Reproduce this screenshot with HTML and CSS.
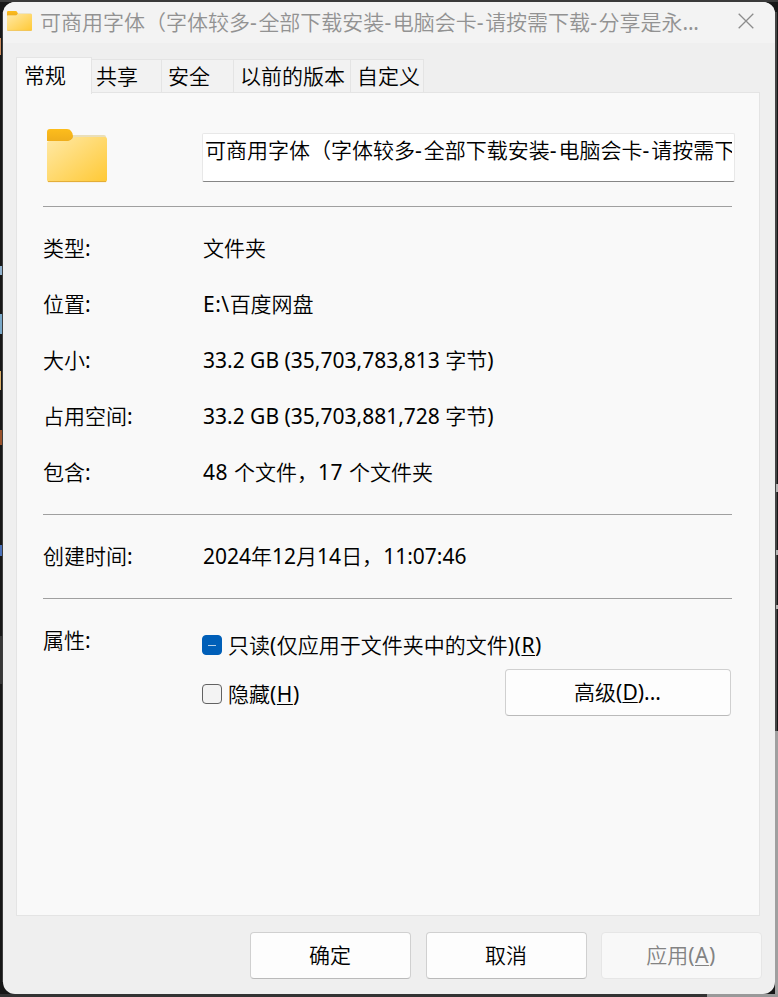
FILE: index.html
```html
<!DOCTYPE html>
<html lang="zh-CN">
<head>
<meta charset="utf-8">
<title>文件夹属性</title>
<link rel="stylesheet" href="styles.css">
</head>
<body>
<div class="desktop">
<main class="window">
  <header class="titlebar">
    <svg class="title-icon" viewBox="0 0 60 54" preserveAspectRatio="none">
      <defs>
        <linearGradient id="folder" x1="0" y1="0" x2="1" y2="1"><stop offset="0" stop-color="#ffe9a6"/><stop offset="1" stop-color="#ffc935"/></linearGradient>
        <linearGradient id="tab" x1="0" y1="0" x2="0" y2="1"><stop offset="0" stop-color="#fdbd1c"/><stop offset="1" stop-color="#efae1c"/></linearGradient>
      </defs>
      <path d="M22 6h35q2 0 2 2v5H22z" fill="#eadfb9"/>
      <path d="M0 3q0-3 3-3h17q2 0 3 1l2 3q2 3 0 6l-1 2-2 1H0z" fill="url(#tab)"/>
      <path d="M0 14q0-2 2-2h19q2 0 3-2 1-2 3-2h31q2 0 2 2v41q0 2-2 2H2q-2 0-2-2z" fill="url(#folder)"/>
      <path d="M1 52.6h58" stroke="#e2ab35"/>
    </svg>
    <h1 class="title">可商用字体（字体较多<span class="dash">-</span>全部下载安装<span class="dash">-</span>电脑会卡<span class="dash">-</span>请按需下载<span class="dash">-</span>分享是永<span class="latin">...</span></h1>
    <svg class="close" viewBox="0 0 16 16"><path d="M.7.7l14.6 14.6M15.3.7L.7 15.3"/></svg>
  </header>
  <nav class="tabs">
    <span class="tab active">常规</span><span class="tab t2">共享</span><span class="tab t3">安全</span><span class="tab t4">以前的版本</span><span class="tab t5">自定义</span>
  </nav>
  <section class="panel">
    <div class="head">
      <svg class="folder" viewBox="0 0 60 54" preserveAspectRatio="none">
        <path d="M22 6h35q2 0 2 2v5H22z" fill="#eadfb9"/>
        <path d="M0 3q0-3 3-3h17q3 0 4 2 2 2 2 5 0 4-4 5H0z" fill="url(#tab)"/>
        <path d="M0 14q0-2 2-2h19q2 0 4-2 2-2 4-2h29q2 0 2 2v41q0 2-2 2H2q-2 0-2-2z" fill="url(#folder)"/>
        <path d="M1 52.6h58" stroke="#e2ab35"/>
      </svg>
      <div class="name"><div class="name-text">可商用字体（字体较多<span class="dash">-</span>全部下载安装<span class="dash">-</span>电脑会卡<span class="dash">-</span>请按需下</div></div>
    </div>
    <div class="group">
      <div class="row"><span>类型<span class="latin">:</span></span><span>文件夹</span></div>
      <div class="row"><span>位置<span class="latin">:</span></span><span><span class="latin wide">E:\</span>百度网盘</span></div>
      <div class="row"><span>大小<span class="latin">:</span></span><span><span class="latin">33.2 GB (35,703,783,813 </span>字节<span class="latin">)</span></span></div>
      <div class="row"><span>占用空间<span class="latin">:</span></span><span><span class="latin">33.2 GB (35,703,881,728 </span>字节<span class="latin">)</span></span></div>
      <div class="row"><span>包含<span class="latin">:</span></span><span><span class="latin wide">48 </span>个文件，<span class="latin wide">17 </span>个文件夹</span></div>
    </div>
    <div class="group">
      <div class="row"><span>创建时间<span class="latin">:</span></span><span><span class="latin">2024</span>年<span class="latin">12</span>月<span class="latin">14</span>日，<span class="latin">11:07:46</span></span></div>
    </div>
    <div class="group attrs">
      <span class="attr-label">属性<span class="latin">:</span></span>
      <div class="attr-body">
        <div class="check"><span class="box mixed"></span><span class="caption">只读<span class="latin wide">(</span>仅应用于文件夹中的文件<span class="latin wide">)(<u>R</u>)</span></span></div>
        <div class="attr-line">
          <div class="check hidden-check"><span class="box"></span><span class="caption">隐藏<span class="latin wide">(<u>H</u>)</span></span></div>
          <div class="button advanced"><span>高级<span class="latin">(<u>D</u>)...</span></span></div>
        </div>
      </div>
    </div>
  </section>
  <footer class="footer">
    <div class="button">确定</div>
    <div class="button">取消</div>
    <div class="button disabled"><span>应用<span class="latin wide">(<u>A</u>)</span></span></div>
  </footer>
</main>
</div>
</body>
</html>
```
FILE: styles.css
```css
* { box-sizing: border-box; }
body {
  margin: 0;
  width: 778px;
  height: 997px;
  overflow: hidden;
  font: 350 21px/28px "Noto Sans CJK SC", sans-serif;
  color: #000;
}
.desktop {
  height: 997px;
  padding: 2px 3px 3px;
  background:
    linear-gradient(#3a3a3a, #3a3a3a) 0 0 / 778px 2px no-repeat,
    linear-gradient(#999, #999) 707px 994px / 71px 3px no-repeat,
    linear-gradient(#333, #333) 0 994px / 707px 3px no-repeat,
    linear-gradient(#79a8c8, #79a8c8) 0 314px / 2px 20px no-repeat,
    linear-gradient(#d9ae68, #d9ae68) 0 371px / 1px 19px no-repeat,
    linear-gradient(#98512b, #98512b) 0 430px / 2px 15px no-repeat,
    linear-gradient(#4a70b8, #4a70b8) 0 545px / 2px 11px no-repeat,
    linear-gradient(#c98a5c, #c98a5c) 0 38px / 1px 17px no-repeat,
    linear-gradient(#8fb0cc, #8fb0cc) 0 266px / 2px 9px no-repeat,
    linear-gradient(#3d3d3d, #3d3d3d) 2px 12px / 1px 970px no-repeat,
    linear-gradient(#363636, #363636) 0 636px / 2px 48px no-repeat,
    linear-gradient(#b5b5b5, #b5b5b5) 776px 484px / 2px 8px no-repeat,
    linear-gradient(#b5b5b5, #b5b5b5) 776px 550px / 2px 5px no-repeat,
    linear-gradient(#b5b5b5, #b5b5b5) 776px 605px / 2px 4px no-repeat,
    linear-gradient(#444, #444) 775px 12px / 2px 719px no-repeat,
    linear-gradient(#a0a0a0, #a0a0a0) 775px 731px / 3px 266px no-repeat,
    #171717;
}
.window {
  display: flex;
  flex-direction: column;
  width: 772px;
  height: 992px;
  border-radius: 12px;
  background: #efefef;
  overflow: hidden;
}
.latin {
  font-family: "Noto Sans", "Open Sans", sans-serif;
  font-weight: 400;
  font-size: 21px;
  letter-spacing: 0;
  line-height: 1;
}
.wide { letter-spacing: 0.5px; }
.dash {
  font-family: "Noto Sans", "Open Sans", sans-serif;
  font-weight: 400;
  letter-spacing: 1.6px;
  line-height: 1;
}
.name .dash { letter-spacing: 2px; }
u { text-decoration: underline; text-decoration-thickness: 1px; text-underline-offset: 2px; }
.titlebar {
  display: flex;
  align-items: center;
  flex: none;
  height: 41px;
  padding: 0 21px 3px 4px;
  background: #f3f3f3;
  color: #929292;
}
.title-icon { width: 25px; height: 20px; margin-right: 8px; }
.title { flex: 1; margin: 0; font-size: 21px; font-weight: 350; white-space: nowrap; }
.title .latin { letter-spacing: -0.2px; }
.close { width: 16px; height: 16px; fill: none; stroke: #8c8c8c; stroke-width: 1.3; }
.tabs {
  display: flex;
  align-items: flex-end;
  flex: none;
  height: 50px;
  padding-left: 13px;
}
.tab {
  height: 35px;
  margin-bottom: -1px;
  padding: 1px 0 0 4px;
  border: 1px solid #e4e4e4;
  border-left: 0;
  background: #f2f2f2;
  white-space: nowrap;
}
.tab.active {
  position: relative;
  width: 76px;
  height: 37px;
  padding: 2px 0 0 7px;
  border-left: 1px solid #e4e4e4;
  border-bottom: 0;
  background: #f9f9f9;
}
.t2 { width: 70px; }
.t3 { width: 72px; padding-left: 6px; }
.t4 { width: 117px; padding-left: 6px; }
.t5 { width: 73px; padding-left: 6px; }
.panel {
  flex: none;
  width: 744px;
  height: 824px;
  margin: -1px 0 0 13px;
  padding: 0 27px 0 26px;
  border: 1px solid #e4e4e4;
  background: #f9f9f9;
}
.head { display: flex; height: 113px; }
.folder { flex: none; width: 60px; height: 54px; margin: 36px 95px 0 4px; }
.name {
  width: 533px;
  height: 49px;
  margin: 40px -3px 0 0;
  padding: 1px 2px 0;
  border: 1px solid #e8e8e8;
  border-bottom-color: #868686;
  border-radius: 2px;
  background: #fff;
  flex: none;
}
.name-text { overflow: hidden; white-space: nowrap; }
.group { width: 689px; padding: 13px 0 14px; border-top: 1px solid #a0a0a0; }
.row {
  display: grid;
  grid-template-columns: 160px 1fr;
  align-items: center;
  height: 56px;
  padding-bottom: 3px;
  white-space: nowrap;
}
.attrs { display: grid; grid-template-columns: 159px 1fr; padding-bottom: 0; }
.attr-label { padding-top: 13px; }
.attr-body { padding-top: 19px; }
.check { display: flex; align-items: center; gap: 6px; height: 28px; white-space: nowrap; }
.caption { padding-bottom: 3px; }
.hidden-check { padding-top: 3px; }
.box {
  display: grid;
  place-items: center;
  width: 20px;
  height: 20px;
  border: 1px solid #626262;
  border-radius: 4px;
  background: #f3f3f3;
}
.mixed { border-color: #005fb8; background: #005fb8; }
.mixed::after { content: ""; width: 8px; height: 1px; background: #b5d0e9; }
.attr-line { display: flex; justify-content: space-between; align-items: center; height: 47px; margin: 10px 1px 0 0; }
.button {
  display: grid;
  place-items: center;
  width: 161px;
  height: 47px;
  padding: 0 1px 4px 0;
  border: 1px solid #d0d0d0;
  border-bottom-color: #bababa;
  border-radius: 4px;
  background: #fdfdfd;
}
.advanced { width: 226px; }
.footer { display: flex; gap: 15px; padding: 16px 0 0 247px; }
.disabled { margin-left: -1px; border-color: #e6e6e6; background: #f8f8f8; color: #838383; }
```
